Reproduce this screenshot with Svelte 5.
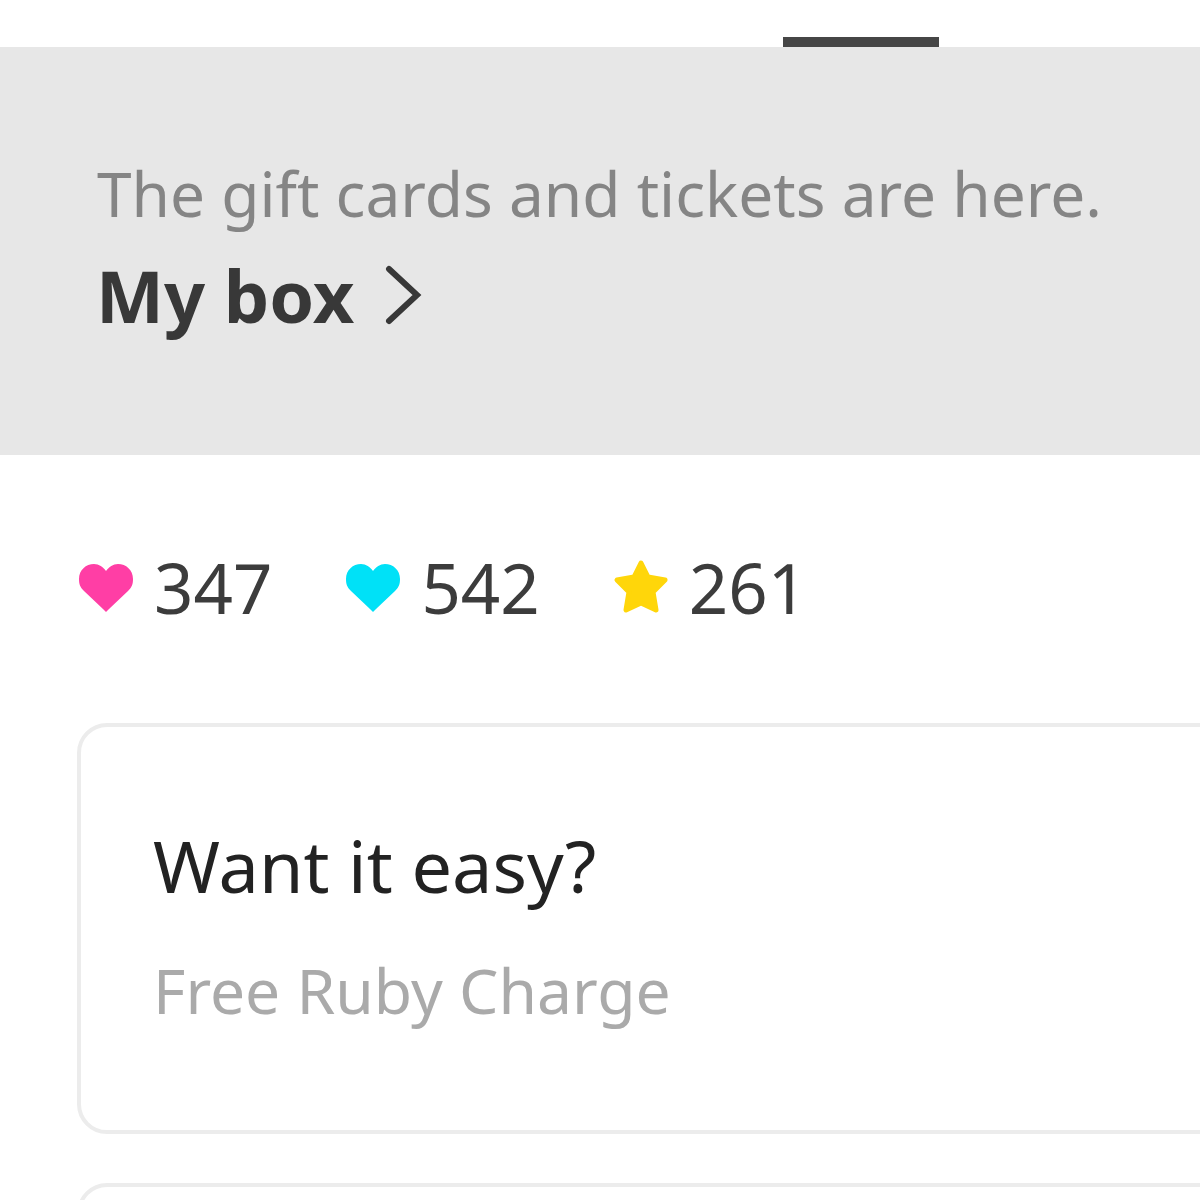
<script>
  const stats = [
    { icon: 'heart', color: '#ff3ea5', value: 347 },
    { icon: 'heart', color: '#00e1f7', value: 542 },
    { icon: 'star', color: '#ffd60a', value: 261 }
  ];
</script>

<div class="page">
  <div class="tabs">
    <div class="indicator"></div>
  </div>

  <div class="banner">
    <p class="banner-text">The gift cards and tickets are here.</p>
    <div class="banner-link">
      <span>My box</span>
      <svg width="40" height="60" viewBox="0 0 40 60">
        <path d="M5 4 L33 30 L5 56" fill="none" stroke="#383838" stroke-width="6" stroke-linecap="round" stroke-linejoin="miter" />
      </svg>
    </div>
  </div>

  <div class="stats">
    {#each stats as stat}
      <div class="stat">
        {#if stat.icon === 'heart'}
          <svg class="icon heart" width="56" height="48" viewBox="0 0 56 48">
            <path d="M28 48 C27 47 26 46 25 45 L6 27 C2 23 1 20 1 15 C1 6 8 0 16 0 C21 0 25 3 28 7 C31 3 35 0 40 0 C48 0 55 6 55 15 C55 20 54 23 50 27 L31 45 C30 46 29 47 28 48 Z" fill={stat.color} />
          </svg>
        {:else}
          <svg class="icon" width="56" height="56" viewBox="0 0 56 56">
            <path d="M28 4 L35 18 L52 21 L40 33 L43 51 L28 44 L13 51 L16 33 L4 21 L21 18 Z" fill={stat.color} stroke={stat.color} stroke-width="5" stroke-linejoin="round" />
          </svg>
        {/if}
        <span class="value">{stat.value}</span>
      </div>
    {/each}
  </div>

  <div class="card">
    <p class="card-title">Want it easy?</p>
    <p class="card-sub">Free Ruby Charge</p>
  </div>
  <div class="card"></div>
</div>

<style>
  :global(body) {
    margin: 0;
    background: #fff;
  }

  p {
    margin: 0;
  }

  .page {
    width: 1200px;
    height: 1200px;
    overflow: hidden;
    font-family: "Noto Sans", sans-serif;
  }

  .tabs {
    height: 47px;
    display: flex;
    align-items: flex-end;
    padding-left: 783px;
    box-sizing: border-box;
  }

  .indicator {
    width: 156px;
    height: 10px;
    background: #464646;
  }

  .banner {
    height: 408px;
    box-sizing: border-box;
    padding: 102px 0 0 96px;
    background: #e7e7e7;
  }

  .banner-text {
    margin-left: 1px;
    font-size: 62.2px;
    line-height: 88px;
    color: #858585;
    white-space: nowrap;
  }

  .banner-link {
    display: flex;
    align-items: center;
    gap: 30px;
    margin-top: 14px;
    font-size: 72px;
    line-height: 88px;
    font-weight: 700;
    color: #383838;
  }

  .stats {
    display: flex;
    gap: 73px;
    align-items: center;
    height: 88px;
    margin-top: 88px;
    padding-left: 78px;
  }

  .stat {
    display: flex;
    align-items: center;
    gap: 20px;
  }

  .heart {
    margin-top: 1px;
  }

  .value {
    font-size: 69px;
    line-height: 86px;
    color: #3c3c3c;
  }

  .card {
    box-sizing: border-box;
    width: 1200px;
    height: 411px;
    margin: 92px 0 0 77px;
    padding: 94px 0 0 72px;
    border: 4px solid #ececec;
    border-radius: 30px;
  }

  .card + .card {
    margin-top: 49px;
  }

  .card-title {
    font-size: 72px;
    line-height: 88px;
    color: #222;
  }

  .card-sub {
    margin-top: 41px;
    font-size: 62.4px;
    line-height: 80px;
    color: #aaa;
  }
</style>
